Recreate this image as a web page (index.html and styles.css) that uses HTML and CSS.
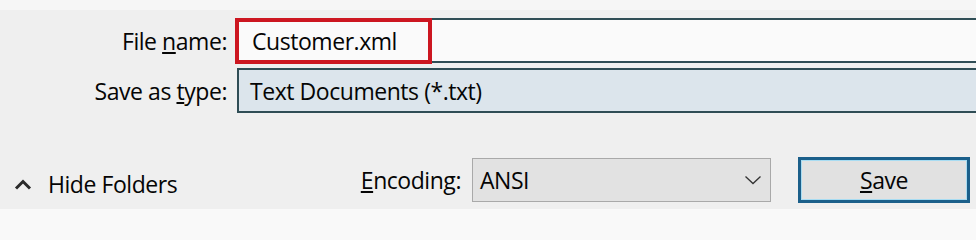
FILE: index.html
```html
<!DOCTYPE html>
<html>
<head>
<meta charset="utf-8">
<link rel="stylesheet" href="styles.css">
</head>
<body>
<div class="dialog">
  <div class="top-strip"></div>
  <div class="rows">
    <div class="row">
      <label class="label">File <u>n</u>ame:</label>
      <div class="field field-name">
        <span class="field-text">Customer.xml</span>
        <div class="highlight"></div>
      </div>
    </div>
    <div class="row">
      <label class="label">Save as <u>t</u>ype:</label>
      <div class="field field-type">
        <span class="field-text">Text Documents (*.txt)</span>
      </div>
    </div>
  </div>
  <div class="bottom">
    <div class="hide-folders">
      <svg class="chev-up" width="18" height="11" viewBox="0 0 18 11"><path d="M2 9.5 L9 2.5 L16 9.5" fill="none" stroke="#2b2b2b" stroke-width="3"/></svg>
      <span>Hide Folders</span>
    </div>
    <div class="encoding">
      <span class="enc-label"><u>E</u>ncoding:</span>
      <div class="select">
        <span>ANSI</span>
        <svg class="chev-down" width="18" height="10" viewBox="0 0 18 10"><path d="M1.5 1.5 L9 8.5 L16.5 1.5" fill="none" stroke="#333" stroke-width="1.3"/></svg>
      </div>
    </div>
    <button class="save-btn"><u>S</u>ave</button>
  </div>
  <div class="bottom-strip"></div>
</div>
</body>
</html>
```
FILE: styles.css
```css
html {
  margin: 0;
  padding: 0;
  background: #f9f9f9;
}
body {
  margin: 0;
  padding: 0;
  width: 976px;
  height: 220px;
  overflow: hidden;
  background: #efefef;
  font-family: "Open Sans", "Noto Sans", sans-serif;
  font-size: 23px;
  letter-spacing: -0.45px;
  color: #050505;
}
.dialog {
  width: 976px;
  height: 220px;
  display: flex;
  flex-direction: column;
}
.top-strip {
  height: 10px;
  background: #f6f6f6;
}
.rows {
  display: flex;
  flex-direction: column;
  gap: 5px;
  margin-top: 8px;
}
.row {
  display: flex;
  align-items: center;
  height: 45px;
}
.label {
  width: 227px;
  padding-right: 10px;
  text-align: right;
  white-space: nowrap;
}
.field {
  position: relative;
  flex: 1;
  height: 45px;
  box-sizing: border-box;
  border: 2px solid #2f4d55;
  margin-right: -4px;
  display: flex;
  align-items: center;
}
.field-name {
  background: #fafafa;
  padding-left: 13px;
}
.field-type {
  background: #dce5ec;
  padding-left: 11px;
}
.field-text {
  white-space: nowrap;
}
.highlight {
  position: absolute;
  left: -4px;
  top: -2px;
  width: 197px;
  height: 46px;
  box-sizing: border-box;
  border: 4px solid #cc1620;
}
.bottom {
  display: flex;
  align-items: center;
  height: 46px;
  margin-top: 44px;
  padding-left: 14px;
  padding-right: 6px;
}
.hide-folders {
  display: flex;
  align-items: center;
  gap: 16px;
  margin-top: 8px;
}
.chev-up {
  display: block;
}
.encoding {
  margin-left: auto;
  display: flex;
  align-items: center;
  gap: 11px;
}
.select {
  width: 299px;
  height: 44px;
  box-sizing: border-box;
  border: 1px solid #a9a9a9;
  background: #e2e2e2;
  display: flex;
  align-items: center;
  justify-content: space-between;
  padding-left: 7px;
  padding-right: 8px;
}
.chev-down {
  display: block;
}
.save-btn {
  margin-left: 27px;
  width: 172px;
  height: 46px;
  box-sizing: border-box;
  border: 3px solid #1b5f8a;
  box-shadow: inset 0 0 0 1px #a8dcf2;
  background: #e1e1e1;
  font: inherit;
  letter-spacing: inherit;
  color: #050505;
  padding: 0;
}
.bottom-strip {
  margin-top: 6px;
  flex: 1;
  background: #f9f9f9;
}
```
